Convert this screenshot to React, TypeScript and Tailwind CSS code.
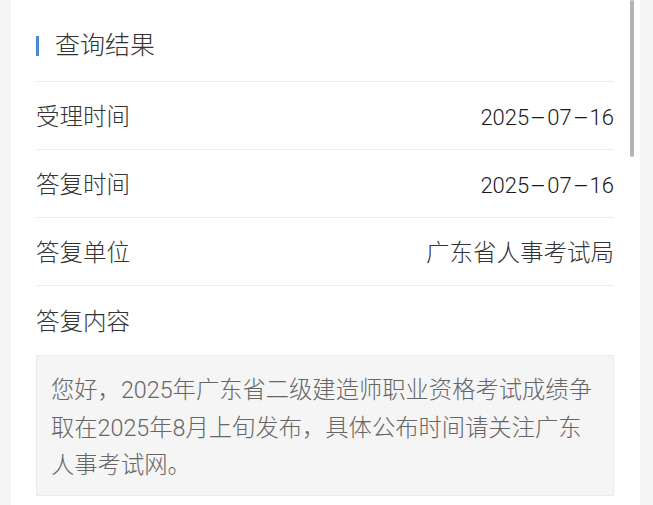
import React from "react";

const Dash = () => <span className="inline-block w-[18px] scale-x-[2.3] text-center">-</span>;

const DateText = () => (
  <span className="text-[22px] font-light text-[#1a1a1a]" style={{ fontFamily: 'Roboto, "Noto Sans CJK SC", sans-serif' }}>
    2025<Dash />07<Dash />16
  </span>
);

export default function App() {
  return (
    <div
      className="relative h-[505px] w-[653px] overflow-hidden bg-[#f5f5f5] pl-[11px] pr-[13px] font-light"
      style={{ fontFamily: 'Roboto, "Noto Sans CJK SC", sans-serif' }}
    >
      <div className="h-full bg-white pl-[25px] pr-[26px]">
        <div className="h-[82px] border-b border-[#ececec] pt-[29px]">
          <div className="flex h-[34px] items-center">
            <div className="h-[20px] w-[3px] bg-[#4a87d6]" />
            <div className="ml-[16px] text-[25px] leading-[34px] text-[#333333]">查询结果</div>
          </div>
        </div>
        <div className="flex h-[68px] items-center justify-between border-b border-[#ececec] pt-[4px] text-[23.5px] text-[#333333]">
          <span>受理时间</span>
          <DateText />
        </div>
        <div className="flex h-[68px] items-center justify-between border-b border-[#ececec] pt-[4px] text-[23.5px] text-[#333333]">
          <span>答复时间</span>
          <DateText />
        </div>
        <div className="flex h-[68px] items-center justify-between border-b border-[#ececec] pt-[4px] text-[23.5px] text-[#333333]">
          <span>答复单位</span>
          <span>广东省人事考试局</span>
        </div>
        <div className="flex h-[69px] items-center pt-[4px] text-[23.5px] text-[#333333]">答复内容</div>
        <div className="border border-[#ebebeb] bg-[#f5f5f5] px-[14px] pt-[16px] pb-[10px] text-[23.3px] leading-[37.5px] text-[#666666]">
          <div className="whitespace-nowrap">您好，2025年广东省二级建造师职业资格考试成绩争</div>
          <div className="whitespace-nowrap">取在2025年8月上旬发布，具体公布时间请关注广东</div>
          <div className="whitespace-nowrap">人事考试网。</div>
        </div>
      </div>
      <div className="absolute left-[630px] top-0 h-[157px] w-[4px] rounded-full bg-[#b3b3b3]" />
    </div>
  );
}
